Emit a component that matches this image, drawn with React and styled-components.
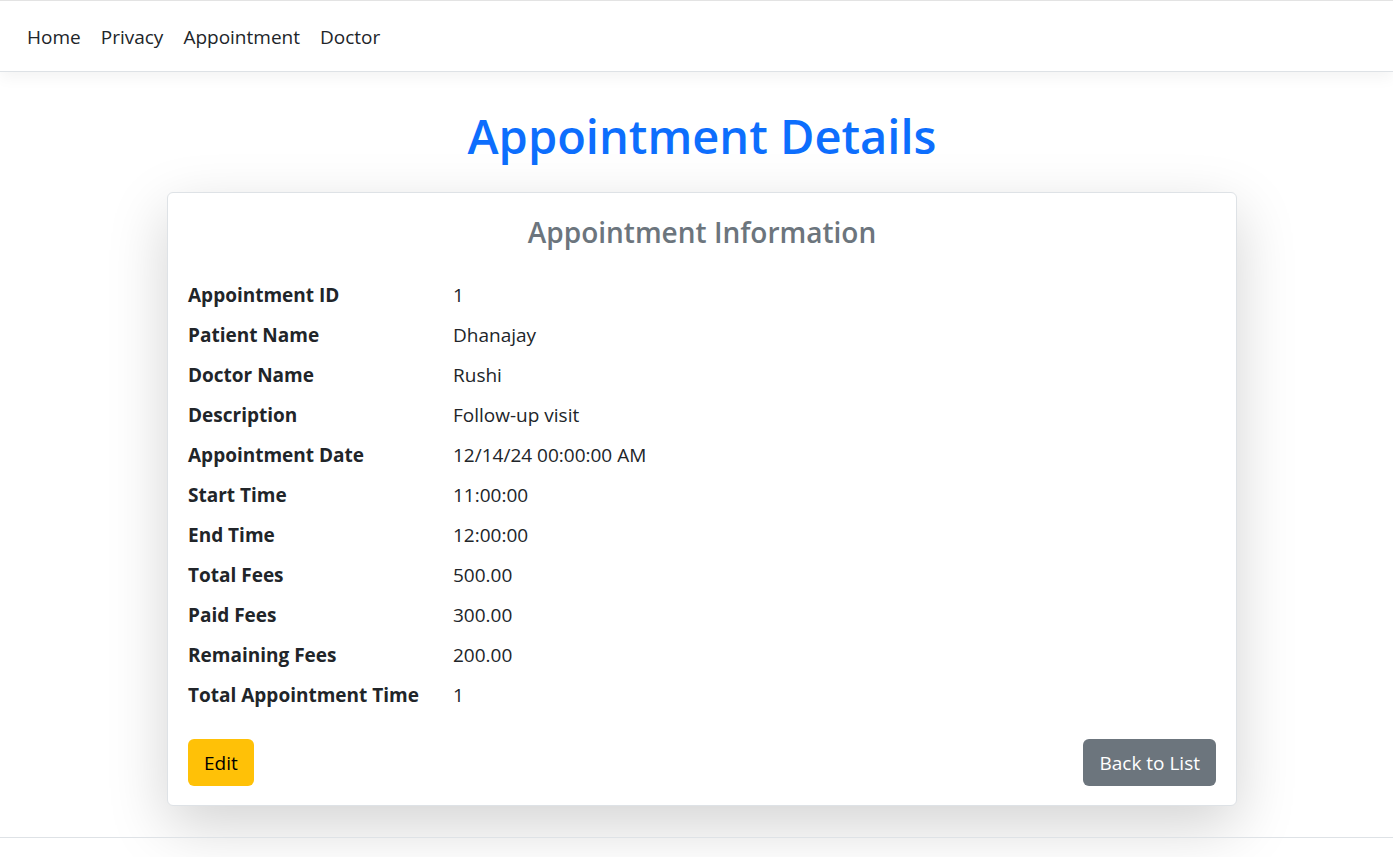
import styled, { createGlobalStyle } from "styled-components";

const GlobalStyle = createGlobalStyle`
  * { box-sizing: border-box; }
  body {
    margin: 0;
    font-family: "Segoe UI", "Open Sans", "Noto Sans", sans-serif;
    color: #212529;
    background: #fff;
  }
`;

const Page = styled.div`
  display: flex;
  flex-direction: column;
  min-height: 100vh;
  overflow: hidden;
`;

const NavBar = styled.nav`
  height: 72px;
  display: flex;
  align-items: center;
  padding: 1px 17px 0;
  background: #fff;
  border-top: 1px solid #e3e3e3;
  border-bottom: 1px solid #dee2e6;
  box-shadow: 0 5px 15px rgba(0, 0, 0, 0.05);
  position: relative;
  z-index: 1;
`;

const NavList = styled.ul`
  display: flex;
  list-style: none;
  margin: 0;
  padding: 0;
`;

const NavLink = styled.a`
  display: block;
  padding: 0 10px;
  font-size: 19px;
  color: #212529;
  text-decoration: none;
`;

const Main = styled.main`
  flex: 1;
  display: flex;
  flex-direction: column;
  align-items: center;
  padding: 0 0 31px 11px;
`;

const Title = styled.h1`
  margin: 30px 0 22px;
  font-size: 47px;
  line-height: 68px;
  font-weight: 600;
  color: #0d6efd;
`;

const Card = styled.section`
  width: 1070px;
  background: #fff;
  border: 1px solid #dee2e6;
  border-radius: 6px;
  box-shadow: 0 20px 60px rgba(0, 0, 0, 0.175);
  padding: 21px 20px 19px;
`;

const CardTitle = styled.h4`
  margin: 0 0 25px;
  text-align: center;
  font-size: 28px;
  line-height: 36px;
  font-weight: 600;
  color: #6c757d;
`;

const InfoList = styled.dl`
  display: grid;
  grid-template-columns: 265px 1fr;
  grid-auto-rows: 40px;
  align-items: center;
  margin: 0 0 24px;
  font-size: 19px;
`;

const Label = styled.dt`
  font-weight: 700;
`;

const Value = styled.dd`
  margin: 0;
`;

const Actions = styled.div`
  display: flex;
  justify-content: space-between;
`;

const Button = styled.button`
  height: 47px;
  padding: 0 16px;
  border: none;
  border-radius: 6px;
  font-family: inherit;
  font-size: 19px;
  background: ${(p) => (p.$variant === "warning" ? "#ffc107" : "#6c757d")};
  color: ${(p) => (p.$variant === "warning" ? "#000" : "#fff")};
`;

const Footer = styled.footer`
  height: 20px;
  border-top: 1px solid #dee2e6;
`;

const details = [
  ["Appointment ID", "1"],
  ["Patient Name", "Dhanajay"],
  ["Doctor Name", "Rushi"],
  ["Description", "Follow-up visit"],
  ["Appointment Date", "12/14/24 00:00:00 AM"],
  ["Start Time", "11:00:00"],
  ["End Time", "12:00:00"],
  ["Total Fees", "500.00"],
  ["Paid Fees", "300.00"],
  ["Remaining Fees", "200.00"],
  ["Total Appointment Time", "1"],
];

const App = () => {
  return (
    <>
      <GlobalStyle />
      <Page>
        <NavBar>
          <NavList>
            {["Home", "Privacy", "Appointment", "Doctor"].map((item) => (
              <li key={item}>
                <NavLink href="#">{item}</NavLink>
              </li>
            ))}
          </NavList>
        </NavBar>
        <Main>
          <Title>Appointment Details</Title>
          <Card>
            <CardTitle>Appointment Information</CardTitle>
            <InfoList>
              {details.map(([label, value]) => (
                <div key={label} style={{ display: "contents" }}>
                  <Label>{label}</Label>
                  <Value>{value}</Value>
                </div>
              ))}
            </InfoList>
            <Actions>
              <Button $variant="warning">Edit</Button>
              <Button>Back to List</Button>
            </Actions>
          </Card>
        </Main>
        <Footer />
      </Page>
    </>
  );
};

export default App;
